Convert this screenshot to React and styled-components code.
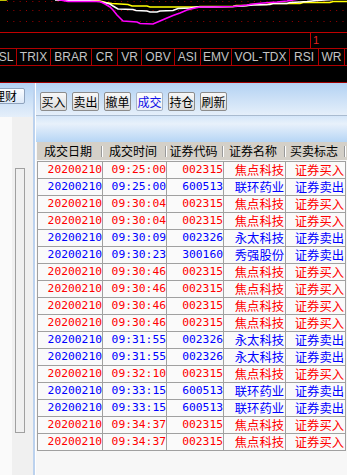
import React from "react";
import styled, {createGlobalStyle} from "styled-components";

const GlobalStyle = createGlobalStyle`
  html, body {
    margin: 0;
    padding: 0;
    background: #000;
  }
  body {
    width: 347px;
    height: 475px;
    overflow: hidden;
    font-family: "Noto Sans CJK SC", "Liberation Sans", sans-serif;
  }
`;

const Screen = styled.div`
  display: flex;
  flex-direction: column;
  width: 347px;
  height: 475px;
  overflow: hidden;
  background: #000;
`;

// ---- indicator chart ----
const ChartBox = styled.div`
  height: 32px;
  border-bottom: 1px solid #c00000;
`;

const ChartSvg = styled.svg`
  display: block;
`;

const ScaleStrip = styled.div`
  display: flex;
  height: 15px;
  padding-left: 310px;
`;

const ScaleMark = styled.div`
  border-left: 1px solid #c00000;
  padding-left: 2px;
  color: #e02020;
  font: 11px/15px "Liberation Sans", sans-serif;
`;

const TabBar = styled.div`
  display: flex;
  height: 16px;
  margin-left: -4px;
  border-top: 1px solid #b00000;
  border-bottom: 1px solid #b00000;
`;

const Tab = styled.div`
  flex: 0 0 ${(p) => p.$w}px;
  box-sizing: border-box;
  border-right: 1px solid #b00000;
  color: #c4c4c4;
  font: 12px/16px "Liberation Sans", sans-serif;
  text-align: center;
  white-space: nowrap;
`;

const BlackGap = styled.div`
  height: 16px;
`;

// ---- trading panel ----
const Trade = styled.div`
  flex: 1;
  display: flex;
  min-height: 0;
  border-top: 1px solid #a00000;
  background: #f7f7f7;
`;

const Side = styled.div`
  width: 33px;
  display: flex;
  flex-direction: column;
  overflow: hidden;
`;

const SideHead = styled.div`
  height: 34px;
  box-sizing: border-box;
  padding-top: 5px;
  background: linear-gradient(#b3d2f3, #e5effa);
`;

const SideButton = styled.div`
  width: 35px;
  height: 16px;
  margin-left: -10px;
  box-sizing: border-box;
  padding-right: 7px;
  border: 1px solid #8fa3bd;
  border-radius: 2px;
  background: linear-gradient(#fbfdff, #dce9f8);
  font-size: 12px;
  line-height: 14px;
  text-align: right;
  white-space: nowrap;
`;

const SideBody = styled.div`
  flex: 1;
  padding: 51px 0 0 15px;
  background: linear-gradient(to right, #fafafa 12px, #f0f0f0 12px);
`;

const TreeScroll = styled.div`
  width: 10px;
  height: 265px;
  box-sizing: border-box;
  border: 1px solid #a0a0a0;
  background: #f0f0f0;
`;

const Divider = styled.div`
  width: 3px;
  background: linear-gradient(to right, #bcd2ee 2px, #fff 2px);
`;

const Main = styled.div`
  flex: 1;
  display: flex;
  flex-direction: column;
  min-width: 0;
`;

const Toolbar = styled.div`
  display: flex;
  gap: 5px;
  height: 33px;
  box-sizing: border-box;
  padding: 9px 0 0 4px;
  border-bottom: 1px solid #a9bbd0;
  background: linear-gradient(#b3d2f3, #e5effa);
`;

const ToolButton = styled.div`
  width: 27px;
  height: 19px;
  box-sizing: border-box;
  border: 1px solid ${(p) => (p.$active ? "#a8b4c4" : "#8c8c8c")};
  border-radius: 2px;
  background: ${(p) =>
    p.$active
      ? "linear-gradient(#fdfdfd, #eef1f6)"
      : "linear-gradient(#f8f8f8, #dadada)"};
  color: ${(p) => (p.$active ? "#1010e8" : "#000")};
  font-size: 12px;
  line-height: 17px;
  text-align: center;
`;

const Band = styled.div`
  height: 26px;
  background: linear-gradient(#d4e6f9, #e8f1fb 30%, #b6d5f5);
`;

const Header = styled.div`
  display: grid;
  grid-template-columns: 66px 64px 57px 62px 60px;
  height: 18px;
  margin: 0 0 1px 1px;
  background: #d4d0c8;
`;

const HeadCell = styled.div`
  display: flex;
  align-items: center;
`;

const HeadLabel = styled.span`
  flex: 1;
  padding-right: 2px;
  color: #000;
  font-size: 12px;
  line-height: 18px;
  text-align: center;
  white-space: nowrap;
`;

const HeadSep = styled.span`
  width: 1px;
  height: 11px;
  margin-right: 1px;
  background: #9a9a9a;
  box-shadow: 1px 0 0 #fff;
`;

const Grid = styled.div`
  display: grid;
  grid-template-columns: 65px 64px 57px 62px 60px;
  grid-auto-rows: 17px;
  margin-left: 1px;
  width: max-content;
  border-top: 1px solid #a0a0a0;
  border-left: 1px solid #a0a0a0;
`;

const Cell = styled.div`
  box-sizing: border-box;
  border-right: 1px solid #a0a0a0;
  border-bottom: 1px solid #a0a0a0;
  background: #fafafa;
  color: ${(p) => (p.$buy ? "#ff0000" : "#0000ff")};
  text-align: right;
  white-space: nowrap;
  padding-right: ${(p) => (p.$mono ? 0 : 1)}px;
  font: ${(p) =>
    p.$mono
      ? `11.3px/16px "DejaVu Sans Mono", "Liberation Mono", monospace`
      : `12.3px/16px "Noto Sans CJK SC", sans-serif`};
`;

const tabs = [
  ["SL", 21],
  ["TRIX", 34],
  ["BRAR", 41],
  ["CR", 26],
  ["VR", 24],
  ["OBV", 33],
  ["ASI", 26],
  ["EMV", 31],
  ["VOL-TDX", 58],
  ["RSI", 29],
  ["WR", 26]
];

const buttons = ["买入", "卖出", "撤单", "成交", "持仓", "刷新"];
const columns = ["成交日期", "成交时间", "证券代码", "证券名称", "买卖标志"];

const JD = ["002315", "焦点科技"];
const LH = ["600513", "联环药业"];
const YT = ["002326", "永太科技"];
const XQ = ["300160", "秀强股份"];

const trades = [
  ["09:25:00", JD, true],
  ["09:25:00", LH, false],
  ["09:30:04", JD, true],
  ["09:30:04", JD, true],
  ["09:30:09", YT, false],
  ["09:30:23", XQ, false],
  ["09:30:46", JD, true],
  ["09:30:46", JD, true],
  ["09:30:46", JD, true],
  ["09:30:46", JD, true],
  ["09:31:55", YT, false],
  ["09:31:55", YT, false],
  ["09:32:10", JD, true],
  ["09:33:15", LH, false],
  ["09:33:15", LH, false],
  ["09:34:37", JD, true],
  ["09:34:37", JD, true]
];

const lines = {
  "#ffff00":
    "0,0 6,0 10,-2 85,-1 100,1 106,2.5 112,3.5 128,4.5 132,6 147,6 150,7 197,7 200,6.5 233,6.5 236,5.5 247,5.5 250,4.5 267,4.5 270,3.5 300,3.5 303,2.5 330,2.5 333,1.5 347,1.5",
  "#ffffff":
    "55,0 85,0.5 100,1.5 106,3 110,4 113,6 118,9 133,9.5 136,10.5 147,11 150,12 157,12 160,11 173,10.5 178,8.5 190,8 197,7 213,7 233,6.5 243,6 253,5 270,4.5 273,3.5 287,3.5 290,2.5 300,2 307,1.5 317,0.5 333,-0.5",
  "#ff00ff":
    "55,-1 68,1.5 100,1.5 105,4 110,7 113,10 117,15 123,21 137,22 140,23.5 153,24 160,21 167,18 173,15.5 180,13 187,10 193,8.5 200,7 213,7 233,6.5 238,6 247,5 253,4 263,3 277,2 287,1 293,0 300,-1"
};

const Chart = () => (
  <ChartSvg width="347" height="32" viewBox="0 0 347 32">
    {[1, 10, 21].map((y) => (
      <line
        key={y}
        x1="7"
        x2="347"
        y1={y + 0.5}
        y2={y + 0.5}
        stroke="#a00000"
        strokeDasharray="1 5.33"
      />
    ))}
    {Object.entries(lines).map(([color, pts]) => (
      <polyline key={color} points={pts} fill="none" stroke={color} strokeWidth="1.6" />
    ))}
  </ChartSvg>
);

const App = () => (
  <Screen>
    <GlobalStyle />
    <ChartBox>
      <Chart />
    </ChartBox>
    <ScaleStrip>
      <ScaleMark>1</ScaleMark>
    </ScaleStrip>
    <TabBar>
      {tabs.map(([name, w]) => (
        <Tab key={name} $w={w}>
          {name}
        </Tab>
      ))}
    </TabBar>
    <BlackGap />
    <Trade>
      <Side>
        <SideHead>
          <SideButton>理财</SideButton>
        </SideHead>
        <SideBody>
          <TreeScroll />
        </SideBody>
      </Side>
      <Divider />
      <Main>
        <Toolbar>
          {buttons.map((b) => (
            <ToolButton key={b} $active={b === "成交"}>
              {b}
            </ToolButton>
          ))}
        </Toolbar>
        <Band />
        <Header>
          {columns.map((c) => (
            <HeadCell key={c}>
              <HeadLabel>{c}</HeadLabel>
              <HeadSep />
            </HeadCell>
          ))}
        </Header>
        <Grid>
          {trades.map(([time, [code, name], buy], i) => (
            <React.Fragment key={i}>
              <Cell $buy={buy} $mono>20200210</Cell>
              <Cell $buy={buy} $mono>{time}</Cell>
              <Cell $buy={buy} $mono>{code}</Cell>
              <Cell $buy={buy}>{name}</Cell>
              <Cell $buy={buy}>{buy ? "证券买入" : "证券卖出"}</Cell>
            </React.Fragment>
          ))}
        </Grid>
      </Main>
    </Trade>
  </Screen>
);

export default App;
